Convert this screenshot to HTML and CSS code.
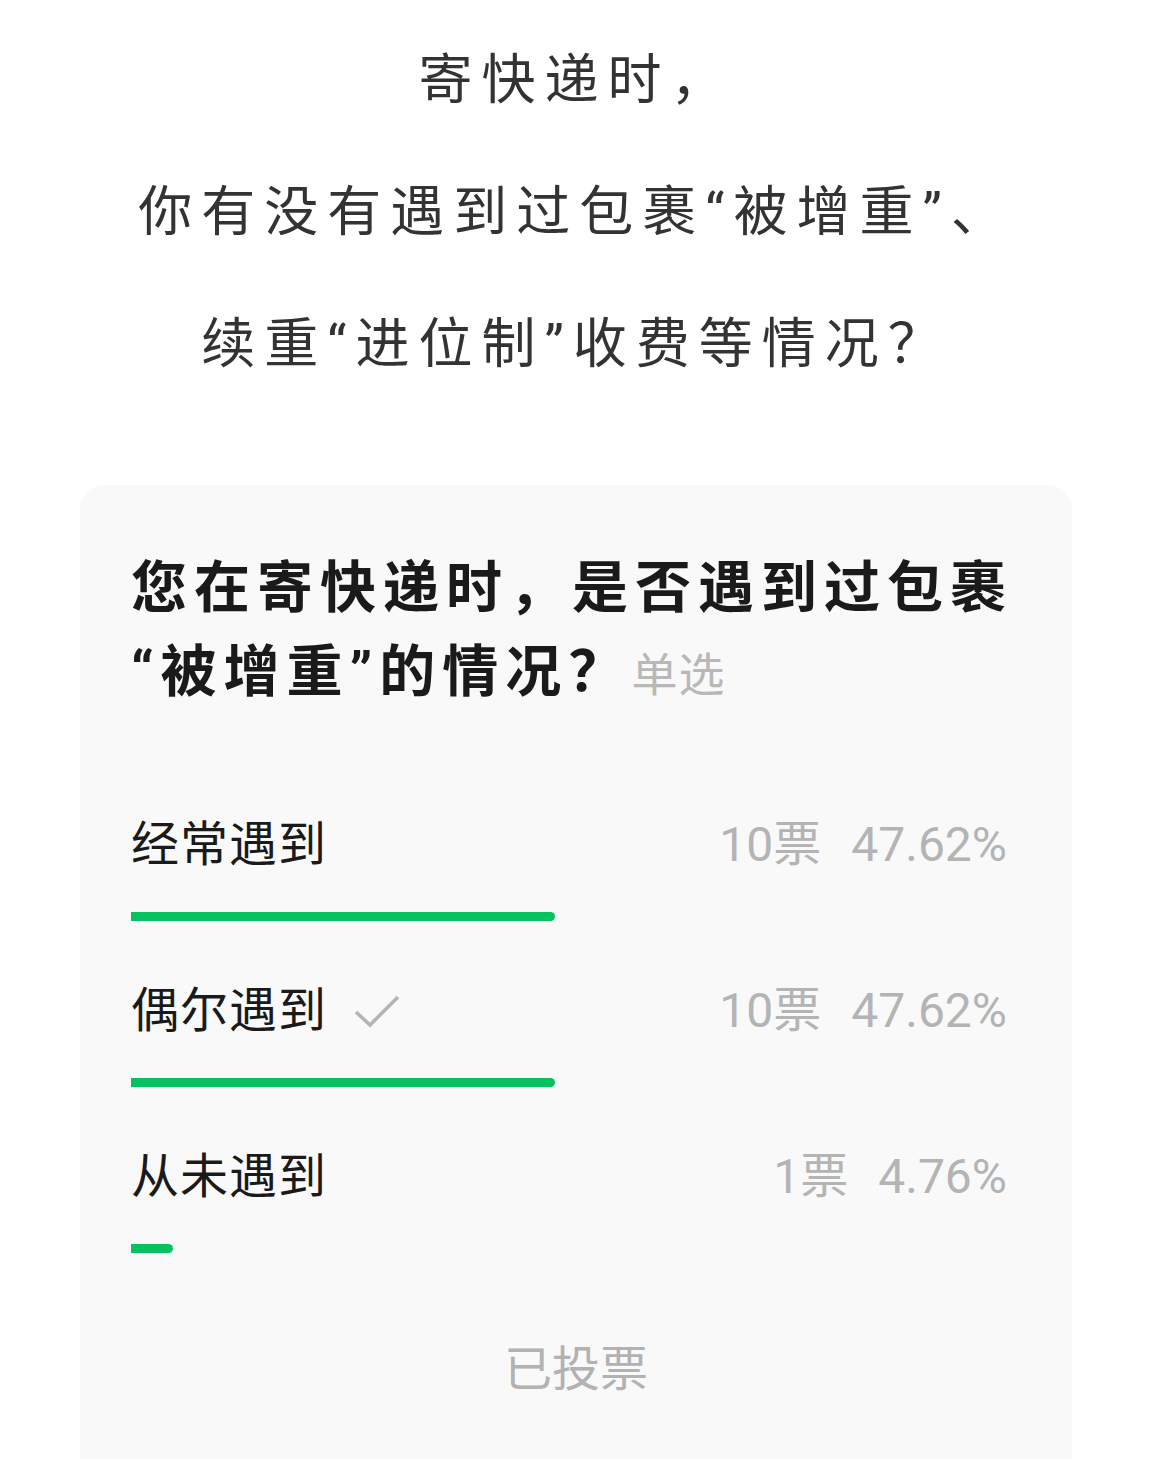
FILE: index.html
```html
<!DOCTYPE html>
<html lang="zh-CN">
<head>
<meta charset="utf-8">
<link rel="stylesheet" href="styles.css">
</head>
<body>
<div class="intro">
	<p>寄快递时，</p>
	<p>你有没有遇到过包裹“被增重”、</p>
	<p>续重“进位制”收费等情况？</p>
</div>
<div class="card">
	<div class="question">您在寄快递时，是否遇到过包裹“被增重”的情况？<span class="kind">单选</span></div>
	<div class="options">
		<div class="option">
			<div class="row">
				<span class="label">经常遇到</span>
				<span class="stat"><span class="votes">10票</span><span class="pct">47.62%</span></span>
			</div>
			<div class="track"><div class="bar" style="width: 47.62%"></div></div>
		</div>
		<div class="option">
			<div class="row">
				<span class="label">偶尔遇到</span>
				<svg class="check" width="46" height="34" viewBox="0 0 46 34"><polyline points="2,18 16,31 44,3" fill="none" stroke="#b4b4b4" stroke-width="3.5"/></svg>
				<span class="stat"><span class="votes">10票</span><span class="pct">47.62%</span></span>
			</div>
			<div class="track"><div class="bar" style="width: 47.62%"></div></div>
		</div>
		<div class="option">
			<div class="row">
				<span class="label">从未遇到</span>
				<span class="stat"><span class="votes">1票</span><span class="pct">4.76%</span></span>
			</div>
			<div class="track"><div class="bar" style="width: 4.76%"></div></div>
		</div>
	</div>
	<div class="voted">已投票</div>
</div>
</body>
</html>
```

FILE: styles.css
```css
body { margin: 0; background: #FFFFFF; color: #1A1A1A;
       font-family: Roboto, "Noto Sans CJK SC", sans-serif; }

/* heading text above the poll */
.intro { padding-top: 15px; text-align: center; color: #333333; }
.intro p { margin: 0; font-size: 54px; line-height: 132px; letter-spacing: 9px; }

/* poll card */
.card { margin: 74px 80px 0 80px; padding: 61px 51px 120px 51px;
        background: #F9F9F9; border-radius: 24px; }
.question { font-size: 56px; line-height: 84px; font-weight: 700; letter-spacing: 7px; color: #1A1A1A; }
.kind { margin-left: 0; font-size: 46px; font-weight: 400; letter-spacing: 1px; color: #B8B8B8; }

.options { margin-top: 98px; display: flex; flex-direction: column; gap: 60px; }
.row { display: flex; align-items: center; height: 60px; }
.label { font-size: 48px; line-height: 60px; letter-spacing: 1px; color: #1A1A1A; }
.check { margin-left: 27px; }
.stat { margin-left: auto; margin-right: 14px; display: flex; align-items: baseline; gap: 30px;
        font-size: 48px; line-height: 60px; color: #B4B4B4; }
.track { margin-top: 37px; height: 9px; }
.bar { height: 9px; background: #07C160; border-radius: 0 5px 5px 0; }

.voted { margin-top: 87px; text-align: center; font-size: 48px; line-height: 60px; color: #B2B2B2; }
```
